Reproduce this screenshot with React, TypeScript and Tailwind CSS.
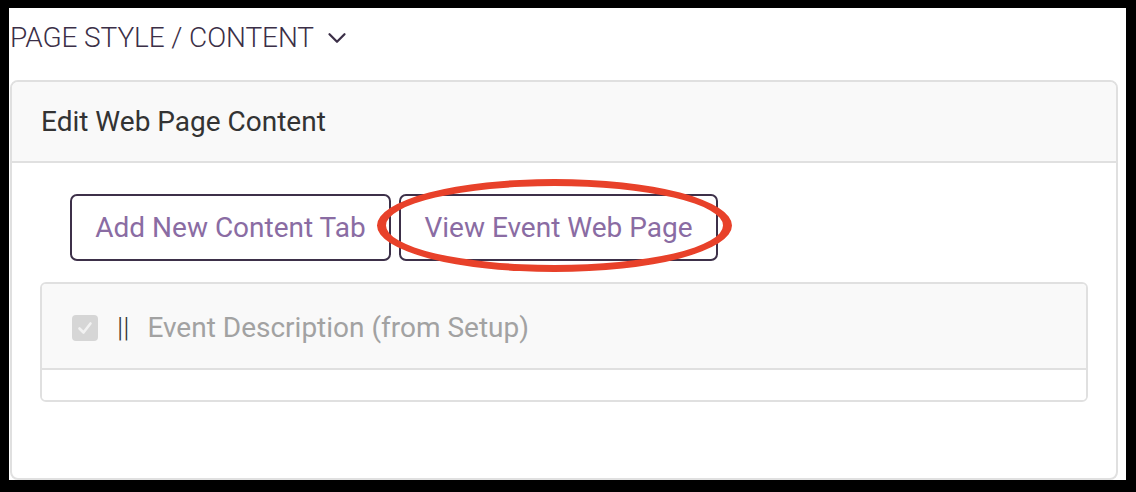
import { ChevronDown } from 'lucide-react'

export default function App() {
  return (
    <div className="w-[1136px] h-[492px] bg-black pt-[8px] pl-[9px] pr-[10px] pb-[12px] font-['Roboto',sans-serif]">
      <div className="bg-white h-full overflow-hidden pl-[1px] pr-[8px]">
        <div className="h-[72px] pb-[12px] flex items-center gap-[8px] text-[28px] font-light text-[#3b2f47] tracking-[-0.1px]">
          <span>PAGE STYLE / CONTENT</span>
          <ChevronDown size={30} strokeWidth={1.8} className="text-[#3b2f47]" />
        </div>

        <div className="border-2 border-[#e0e0e0] rounded-[8px] h-[400px] overflow-hidden">
          <div className="bg-[#f9f9f9] h-[81px] border-b-2 border-[#e0e0e0] flex items-center px-[29px] text-[28px] text-[#333]">
            Edit Web Page Content
          </div>

          <div className="pt-[31px] px-[28px]">
            <div className="flex gap-[8px] pl-[30px]">
              <button className="h-[67px] w-[321px] border-2 border-[#3d3049] rounded-[7px] text-[28px] text-[#8a6ca3]">
                Add New Content Tab
              </button>
              <div className="relative">
                <button className="h-[67px] w-[319px] border-2 border-[#3d3049] rounded-[7px] text-[28px] text-[#8a6ca3]">
                  View Event Web Page
                </button>
                <div className="absolute left-[-22px] top-[-15px] w-[355px] h-[93px] rounded-[50%] border-y-[7px] border-x-[9px] border-[#e8412a] pointer-events-none" />
              </div>
            </div>

            <div className="mt-[21px] border-2 border-[#e0e0e0] rounded-[6px] overflow-hidden">
              <div className="bg-[#f9f9f9] h-[86px] border-b-2 border-[#e0e0e0] flex items-center pl-[30px] pt-[3px]">
                <span className="w-[26px] h-[26px] rounded-[4px] bg-[#d6d6d6] flex items-center justify-center">
                  <svg width="18" height="18" viewBox="0 0 18 18" fill="none">
                    <path d="M3.5 9.5 L7.5 13.5 L14.5 4.5" stroke="#f2f2f2" strokeWidth="2.6" strokeLinecap="round" strokeLinejoin="round" />
                  </svg>
                </span>
                <span className="ml-[19px] text-[28px] font-light text-[#333] leading-none">||</span>
                <span className="ml-[18px] text-[28px] text-[#a2a2a2]">Event Description (from Setup)</span>
              </div>
              <div className="h-[30px] bg-white" />
            </div>
          </div>
        </div>
      </div>
    </div>
  )
}
